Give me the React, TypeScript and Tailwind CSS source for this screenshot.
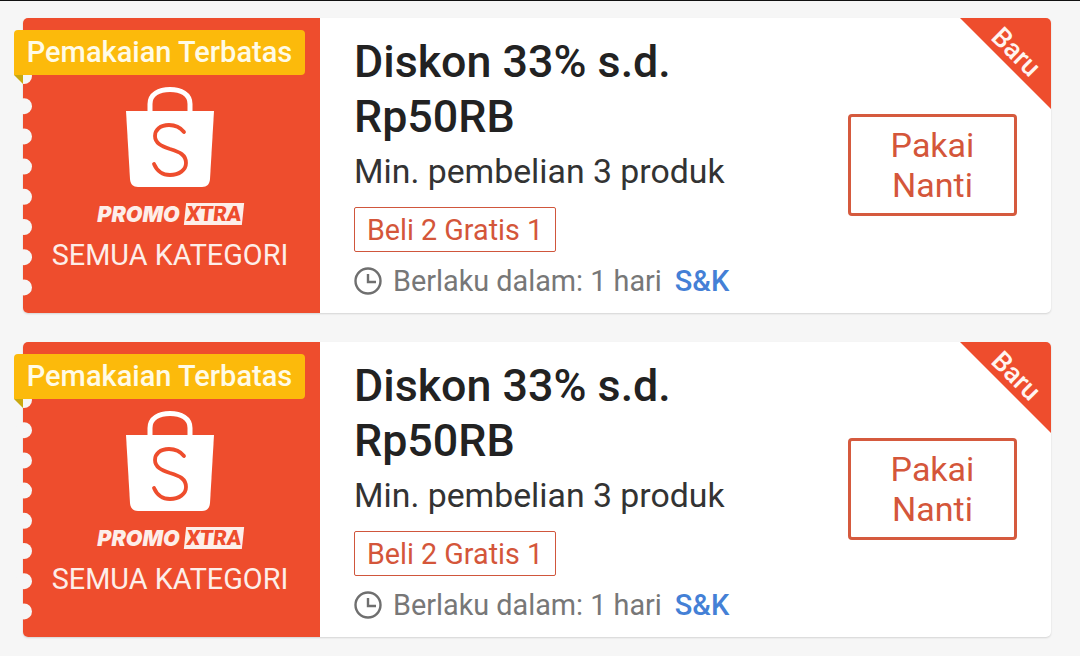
const notches = [0, 1, 2, 3, 4, 5, 6, 7]

function ShopeeBag() {
  return (
    <svg width="90" height="101" viewBox="0 0 90 101" className="block">
      <path d="M25 26V17C25 7 34 2.500 45 2.500S65 7 65 17V26" fill="none" stroke="#fff" strokeWidth="5" />
      <path d="M1 24H89L85 92C84.700 97 82 100 77 100H13C8 100 5.300 97 5 92Z" fill="#fff" />
      <path d="M59 45C55 40 50 38 44 38C35 38 30 43 30 49C30 56 36 59 45 62C55 65 61 68 61 76C61 83 54 88 45 88C38 88 32 84 29 77" fill="none" stroke="#ee4d2d" strokeWidth="3.800" strokeLinecap="round" />
    </svg>
  )
}

function Voucher() {
  return (
    <div className="relative flex h-[295px] w-[1028px] rounded-[5px] bg-white shadow-[0_1px_2px_rgba(0,0,0,0.14)]">
      <div className="relative flex w-[297px] shrink-0 flex-col items-center rounded-l-[5px] bg-[#ee4d2d] pr-[3px] pt-[69px] text-white">
        {notches.map((n) => (
          <span key={n} className="absolute left-[-7px] top-[0px] h-[16px] w-[16px] rounded-full bg-[#f6f6f6]" style={{ transform: `translateY(${50 + n * 30.200}px)` }} />
        ))}
        <div className="absolute left-[-9px] top-[12px] flex h-[45px] w-[291px] items-center justify-center rounded-[4px] rounded-bl-none bg-[#fcba0b] text-[29px] font-medium text-[#fffbe6]">
          Pemakaian Terbatas
        </div>
        <div className="absolute left-[-9px] top-[57px] h-0 w-0 border-l-[9px] border-t-[9px] border-l-transparent border-t-[#c9a80f]" />
        <ShopeeBag />
        <div className="mt-[14px] flex items-center gap-[5px]">
          <span className="text-[21.500px] leading-[24px] font-black italic text-[#fdeee9] [font-family:'Inter',sans-serif]">PROMO</span>
          <span className="flex h-[22px] w-[58px] -skew-x-6 items-center justify-center bg-[#fdeee9] text-[21px] font-black leading-none text-[#ee4d2d]">XTRA</span>
        </div>
        <div className="mt-[12px] text-[28.800px] leading-[34px] text-[#fdeee9]">SEMUA KATEGORI</div>
      </div>

      <div className="flex min-w-0 flex-1 flex-col pl-[34px] pt-[16px]">
        <div className="w-[400px] text-[44.800px] font-medium leading-[55px] text-[#222222]">Diskon 33% s.d. Rp50RB</div>
        <div className="mt-[8px] text-[33.800px] leading-[40px] text-[#333333]">Min. pembelian 3 produk</div>
        <div className="mt-[15px] flex h-[45px] w-[202px] items-center justify-center rounded-[2px] border border-[#d0563c] pt-[2px] text-[28.700px] text-[#d4563a]">Beli 2 Gratis 1</div>
        <div className="mt-[9px] flex items-center">
          <svg width="28" height="28" viewBox="0 0 28 28" fill="none" stroke="#6f6f6f" strokeWidth="2.400" className="mr-[11px]">
            <circle cx="14" cy="14" r="12.500" />
            <path d="M14 7V15H22" />
          </svg>
          <span className="text-[28.800px] leading-[40px] text-[#777777]">Berlaku dalam: 1 hari</span>
          <span className="ml-[13px] text-[29px] font-medium leading-[40px] text-[#4480d6]">S&amp;K</span>
        </div>
      </div>

      <div className="flex w-[235px] shrink-0 items-start pl-[32px] pt-[96px]">
        <div className="flex h-[102px] w-[169px] items-center justify-center rounded-[4px] border-[3px] border-[#d55a3e] text-center text-[34px] leading-[40px] text-[#d4563a]">
          Pakai<br />Nanti
        </div>
      </div>

      <div className="absolute right-0 top-0 h-[91px] w-[91px] rounded-tr-[5px] bg-[#ee4d2d] [clip-path:polygon(0_0,100%_0,100%_100%)]" />
      <div className="absolute right-[7px] top-[18px] rotate-45 text-[27px] font-medium leading-[32px] text-[#fff4f0]">Baru</div>
    </div>
  )
}

export default function App() {
  return (
    <div className="h-[656px] w-[1080px] overflow-hidden bg-[#f6f6f6] [font-family:'Roboto',sans-serif]">
      <div className="h-px bg-[#111]" />
      <div className="flex flex-col gap-[29px] pl-[23px] pt-[17px]">
        <Voucher />
        <Voucher />
      </div>
    </div>
  )
}
